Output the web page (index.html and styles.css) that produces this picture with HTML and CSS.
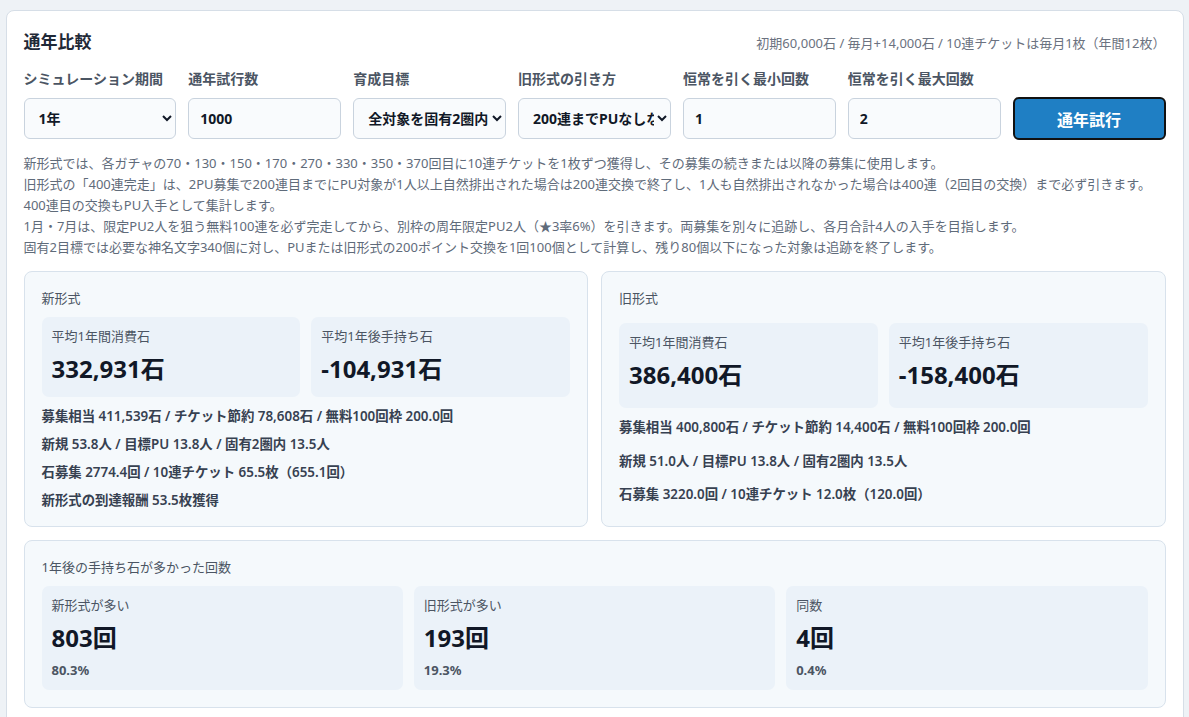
FILE: index.html
```html
<!DOCTYPE html>
<html lang="ja">
<head>
<meta charset="utf-8">
<title>通年比較</title>
<link rel="stylesheet" href="styles.css">
</head>
<body>
<div class="page">
  <section class="panel">
    <header class="panel-head">
      <h2 class="panel-title">通年比較</h2>
      <p class="note">初期60,000石 / 毎月+14,000石 / 10連チケットは毎月1枚（年間12枚）</p>
    </header>

    <div class="form">
      <label class="field">
        <span class="field-label">シミュレーション期間</span>
        <select class="control">
          <option>1年</option>
        </select>
      </label>
      <label class="field">
        <span class="field-label">通年試行数</span>
        <input class="control" type="text" value="1000">
      </label>
      <label class="field">
        <span class="field-label">育成目標</span>
        <select class="control">
          <option>全対象を固有2圏内</option>
        </select>
      </label>
      <label class="field">
        <span class="field-label">旧形式の引き方</span>
        <select class="control">
          <option>200連までPUなしなら400連完走</option>
        </select>
      </label>
      <label class="field">
        <span class="field-label">恒常を引く最小回数</span>
        <input class="control" type="text" value="1">
      </label>
      <label class="field">
        <span class="field-label">恒常を引く最大回数</span>
        <input class="control" type="text" value="2">
      </label>
      <div class="field field-action">
        <button class="run-btn" type="button">通年試行</button>
      </div>
    </div>

    <div class="desc">
      <p>新形式では、各ガチャの70・130・150・170・270・330・350・370回目に10連チケットを1枚ずつ獲得し、その募集の続きまたは以降の募集に使用します。</p>
      <p>旧形式の「400連完走」は、2PU募集で200連目までにPU対象が1人以上自然排出された場合は200連交換で終了し、1人も自然排出されなかった場合は400連（2回目の交換）まで必ず引きます。</p>
      <p>400連目の交換もPU入手として集計します。</p>
      <p>1月・7月は、限定PU2人を狙う無料100連を必ず完走してから、別枠の周年限定PU2人（★3率6%）を引きます。両募集を別々に追跡し、各月合計4人の入手を目指します。</p>
      <p>固有2目標では必要な神名文字340個に対し、PUまたは旧形式の200ポイント交換を1回100個として計算し、残り80個以下になった対象は追跡を終了します。</p>
    </div>

    <div class="results">
      <div class="card">
        <div class="card-title">新形式</div>
        <div class="stats two">
          <div class="stat">
            <div class="stat-label">平均1年間消費石</div>
            <div class="stat-value">332,931石</div>
          </div>
          <div class="stat">
            <div class="stat-label">平均1年後手持ち石</div>
            <div class="stat-value">-104,931石</div>
          </div>
        </div>
        <div class="line">募集相当 411,539石 / チケット節約 78,608石 / 無料100回枠 200.0回</div>
        <div class="line">新規 53.8人 / 目標PU 13.8人 / 固有2圏内 13.5人</div>
        <div class="line">石募集 2774.4回 / 10連チケット 65.5枚（655.1回）</div>
        <div class="line">新形式の到達報酬 53.5枚獲得</div>
      </div>
      <div class="card">
        <div class="card-title">旧形式</div>
        <div class="stats two">
          <div class="stat">
            <div class="stat-label">平均1年間消費石</div>
            <div class="stat-value">386,400石</div>
          </div>
          <div class="stat">
            <div class="stat-label">平均1年後手持ち石</div>
            <div class="stat-value">-158,400石</div>
          </div>
        </div>
        <div class="line">募集相当 400,800石 / チケット節約 14,400石 / 無料100回枠 200.0回</div>
        <div class="line">新規 51.0人 / 目標PU 13.8人 / 固有2圏内 13.5人</div>
        <div class="line">石募集 3220.0回 / 10連チケット 12.0枚（120.0回）</div>
      </div>
    </div>

    <div class="card counts">
      <div class="card-title">1年後の手持ち石が多かった回数</div>
      <div class="stats three">
        <div class="stat">
          <div class="stat-label">新形式が多い</div>
          <div class="stat-value">803回</div>
          <div class="stat-sub">80.3%</div>
        </div>
        <div class="stat">
          <div class="stat-label">旧形式が多い</div>
          <div class="stat-value">193回</div>
          <div class="stat-sub">19.3%</div>
        </div>
        <div class="stat">
          <div class="stat-label">同数</div>
          <div class="stat-value">4回</div>
          <div class="stat-sub">0.4%</div>
        </div>
      </div>
    </div>
  </section>
</div>
</body>
</html>
```

FILE: styles.css
```css
* { box-sizing: border-box; }

html, body {
  margin: 0;
  padding: 0;
  background: #eef2f6;
  font-family: "Noto Sans", "Noto Sans CJK JP", sans-serif;
  color: #1f2937;
}

.page {
  width: 1178px;
  margin: 10px auto 0;
}

.panel {
  background: #ffffff;
  border: 1px solid #d6dee7;
  border-radius: 8px;
  padding: 19px 17px 17px;
}

.panel-head {
  display: flex;
  justify-content: space-between;
  align-items: center;
}

.panel-title {
  margin: 0;
  font-size: 17px;
  line-height: 24px;
  font-weight: 700;
  color: #1f2937;
}

.note {
  margin: 2px 0 0 0;
  font-size: 13px;
  line-height: 18px;
  color: #6b7280;
}

.form {
  display: grid;
  grid-template-columns: repeat(7, 1fr);
  column-gap: 12px;
  margin-top: 15px;
  align-items: end;
}

.field {
  display: flex;
  flex-direction: column;
  gap: 9px;
}

.field-label {
  font-size: 14px;
  line-height: 20px;
  font-weight: 600;
  color: #4b5563;
  white-space: nowrap;
}

.control {
  height: 41px;
  width: 100%;
  border: 1px solid #c9d3de;
  border-radius: 6px;
  background: #f9fbfd;
  padding: 0 11px;
  font-family: inherit;
  font-size: 14px;
  font-weight: 700;
  color: #111827;
}

select.control {
  padding: 0 0 0 10px;
}

.run-btn {
  height: 43px;
  width: 100%;
  border: 2px solid #111111;
  border-radius: 6px;
  background: #1f7fc4;
  color: #ffffff;
  font-family: inherit;
  font-size: 16px;
  font-weight: 700;
  margin-bottom: -1px;
}

.desc {
  margin-top: 14px;
  font-size: 13px;
  line-height: 21px;
  color: #5f6b7a;
}

.desc p { margin: 0; }

.results {
  display: grid;
  grid-template-columns: 1fr 1fr;
  gap: 13px;
  margin-top: 13px;
}

.card {
  display: grid;
  gap: 10px;
  background: #f5f9fc;
  border: 1px solid #d8e2ec;
  border-radius: 8px;
  padding: 17px;
}

.counts { margin-top: 13px; }

.card-title {
  font-size: 13px;
  line-height: 18px;
  color: #4b5563;
}

.stats {
  display: grid;
  gap: 11px;
}

.stats.two { grid-template-columns: 1fr 1fr; }
.stats.three { grid-template-columns: 1fr 1fr 1fr; }

.stat {
  display: grid;
  align-content: start;
  background: #ebf2f9;
  border-radius: 7px;
  padding: 10px 10px 12px;
}

.stat-label {
  font-size: 13px;
  line-height: 18px;
  color: #4b5563;
}

.stat-value {
  margin-top: 8px;
  font-size: 24px;
  line-height: 32px;
  font-weight: 700;
  color: #111827;
}

.stat-sub {
  margin-top: 7px;
  font-size: 13px;
  line-height: 18px;
  font-weight: 700;
  color: #4b5563;
}

.counts .stat { padding-bottom: 11px; }

.line {
  font-size: 13.4px;
  line-height: 18px;
  font-weight: 600;
  color: #374151;
}
```
